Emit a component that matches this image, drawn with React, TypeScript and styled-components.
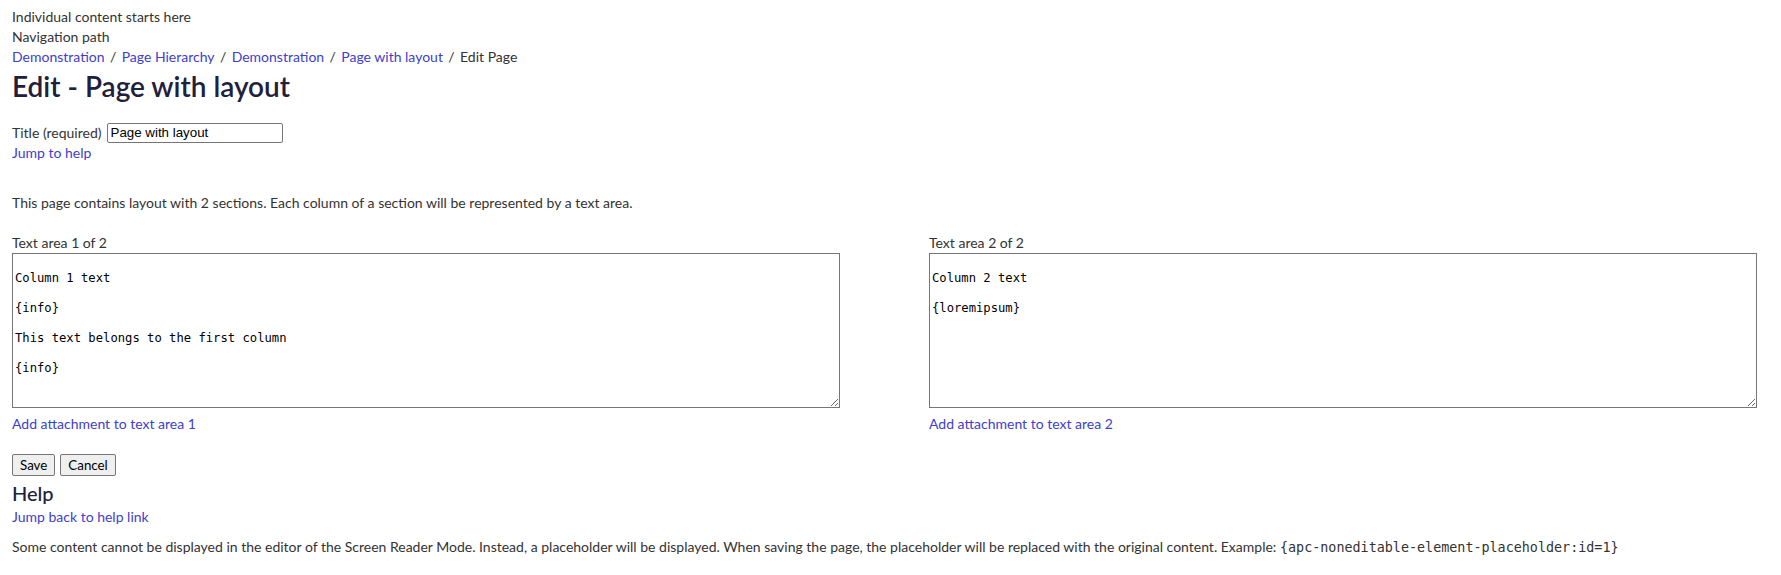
import styled, { createGlobalStyle } from 'styled-components';

const GlobalStyle = createGlobalStyle`
  body {
    margin: 0;
    background: #ffffff;
    font-family: Lato, "Open Sans", sans-serif;
    font-size: 14px;
    color: #333333;
  }
`;

const Page = styled.main`
  padding: 7px 12px 0 12px;
  display: flex;
  flex-direction: column;
  align-items: flex-start;
`;

const Line = styled.div<{ $top?: number }>`
  line-height: 20px;
  margin-top: ${(p) => p.$top ?? 0}px;
`;

const Link = styled.a`
  color: #4040cc;
  text-decoration: none;
  cursor: pointer;
`;

const Crumbs = styled.nav`
  display: flex;
  align-items: center;
  line-height: 20px;
`;

const Sep = styled.span`
  padding: 0 5.4px;
  color: #333333;
`;

const Current = styled.span`
  color: #333333;
`;

const Heading = styled.h1`
  margin: 3px 0 0 0;
  font-size: 28px;
  font-weight: 600;
  line-height: 32px;
  color: #20203d;
`;

const SubHeading = styled.h2`
  margin: 4px 0 0 0;
  font-size: 20px;
  font-weight: 500;
  line-height: 27px;
  color: #20203d;
`;

const TitleRow = styled.div`
  display: flex;
  align-items: center;
  gap: 5px;
  height: 21px;
  margin-top: 20px;
`;

const TitleInput = styled.input`
  box-sizing: border-box;
  width: 176px;
  height: 20px;
  padding: 1px 3px;
  border: 1px solid #767676;
  border-radius: 2px;
  font-family: "Liberation Sans", Arial, sans-serif;
  font-size: 13.33px;
  color: #000000;
`;

const Columns = styled.div`
  display: grid;
  grid-template-columns: 828px 828px;
  column-gap: 89px;
  margin-top: 20px;
`;

const Column = styled.section`
  display: flex;
  flex-direction: column;
  align-items: flex-start;
`;

const Area = styled.textarea`
  box-sizing: border-box;
  width: 828px;
  height: 155px;
  margin: 0;
  padding: 2px;
  border: 1px solid #767676;
  border-radius: 0;
  font-family: "DejaVu Sans Mono", "Liberation Mono", monospace;
  font-size: 12.2px;
  line-height: 15px;
  color: #000000;
  resize: both;
`;

const AttachLine = styled(Line)`
  margin-top: 6px;
`;

const Buttons = styled.div`
  display: flex;
  gap: 5px;
  margin-top: 20px;
`;

const Button = styled.button`
  box-sizing: border-box;
  height: 22px;
  padding: 1px 7px;
  border: 1px solid #767676;
  border-radius: 2px;
  background: #efefef;
  font-family: Lato, "Open Sans", sans-serif;
  font-size: 13.33px;
  color: #000000;
`;

const Code = styled.code`
  font-family: "DejaVu Sans Mono", "Liberation Mono", monospace;
  font-size: 13.4px;
`;

const crumbs = ['Demonstration', 'Page Hierarchy', 'Demonstration', 'Page with layout'];

const areas = [
  { label: 'Text area 1 of 2', text: '\nColumn 1 text\n\n{info}\n\nThis text belongs to the first column\n\n{info}', n: 1 },
  { label: 'Text area 2 of 2', text: '\nColumn 2 text\n\n{loremipsum}', n: 2 },
];

const App: React.FC = () => {
  return (
    <>
      <GlobalStyle />
      <Page>
        <Line>Individual content starts here</Line>
        <Line>Navigation path</Line>
        <Crumbs>
          {crumbs.map((c, i) => (
            <span key={i}>
              <Link>{c}</Link>
              <Sep>/</Sep>
            </span>
          ))}
          <Current>Edit Page</Current>
        </Crumbs>
        <Heading>Edit - Page with layout</Heading>

        <TitleRow>
          <label htmlFor="title">Title (required)</label>
          <TitleInput id="title" defaultValue="Page with layout" />
        </TitleRow>
        <Line>
          <Link>Jump to help</Link>
        </Line>

        <Line $top={30}>
          This page contains layout with 2 sections. Each column of a section will be represented by a text area.
        </Line>

        <Columns>
          {areas.map((a) => (
            <Column key={a.n}>
              <Line>{a.label}</Line>
              <Area defaultValue={a.text} />
              <AttachLine>
                <Link>Add attachment to text area {a.n}</Link>
              </AttachLine>
            </Column>
          ))}
        </Columns>

        <Buttons>
          <Button>Save</Button>
          <Button>Cancel</Button>
        </Buttons>

        <SubHeading>Help</SubHeading>
        <Line>
          <Link>Jump back to help link</Link>
        </Line>
        <Line $top={10}>
          Some content cannot be displayed in the editor of the Screen Reader Mode. Instead, a placeholder will be
          displayed. When saving the page, the placeholder will be replaced with the original content. Example:{' '}
          <Code>{'{apc-noneditable-element-placeholder:id=1}'}</Code>
        </Line>
      </Page>
    </>
  );
};

export default App;
